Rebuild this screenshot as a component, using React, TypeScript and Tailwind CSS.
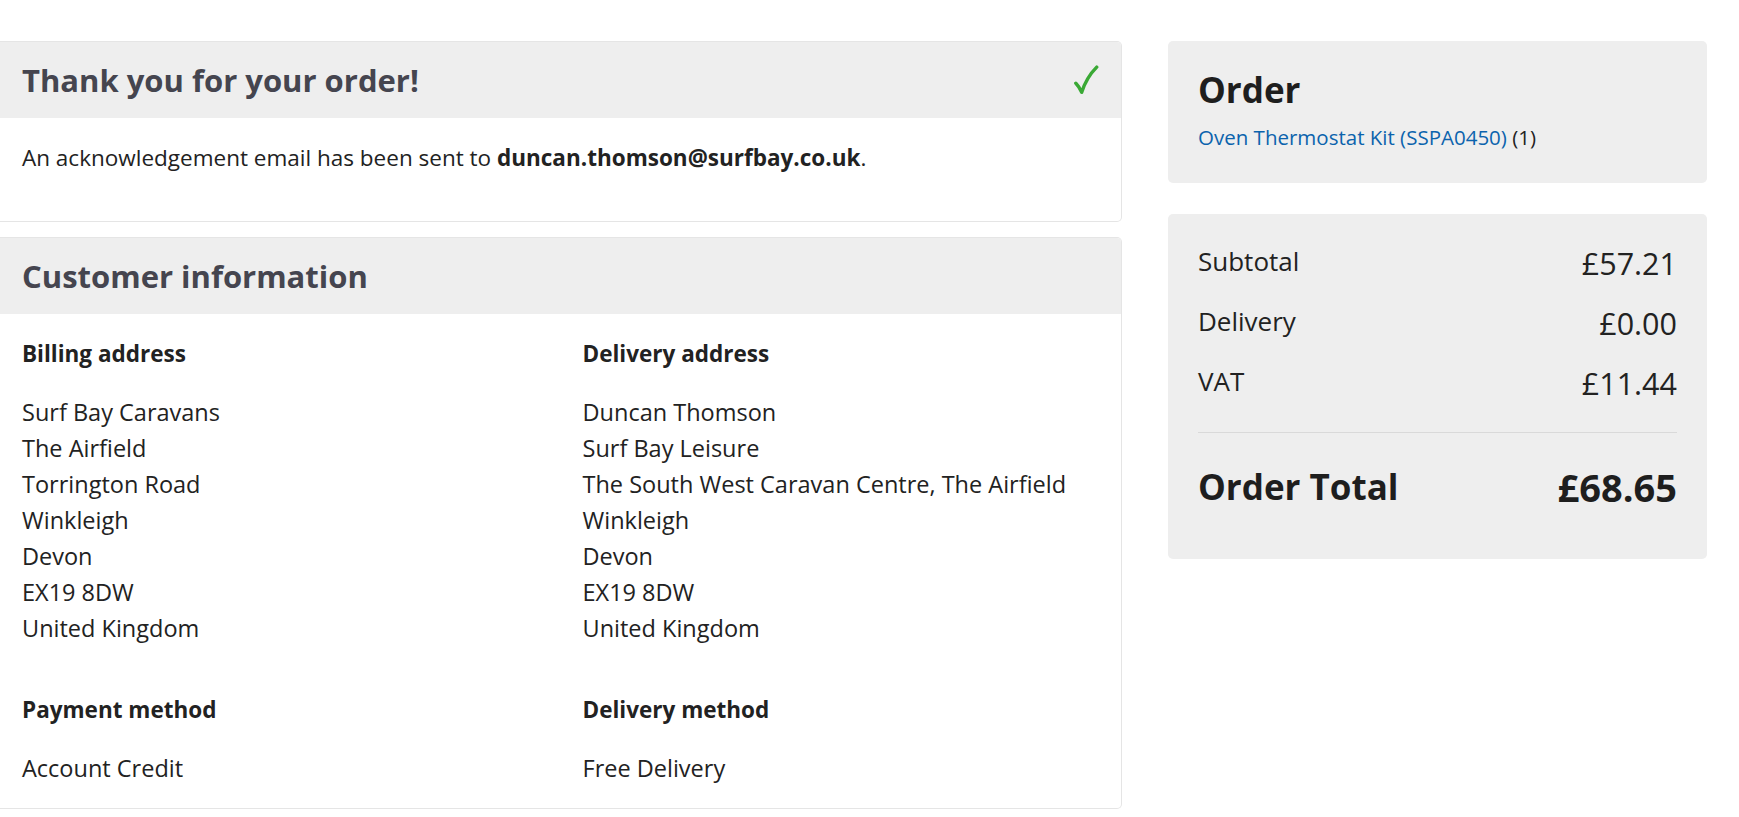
import React from "react";

const billing = [
  "Surf Bay Caravans",
  "The Airfield",
  "Torrington Road",
  "Winkleigh",
  "Devon",
  "EX19 8DW",
  "United Kingdom",
];

const delivery = [
  "Duncan Thomson",
  "Surf Bay Leisure",
  "The South West Caravan Centre, The Airfield",
  "Winkleigh",
  "Devon",
  "EX19 8DW",
  "United Kingdom",
];

const totals = [
  { label: "Subtotal", value: "£57.21" },
  { label: "Delivery", value: "£0.00" },
  { label: "VAT", value: "£11.44" },
];

function CardHeader({ title, check }: { title: string; check?: boolean }) {
  return (
    <div className="flex h-[76px] items-center justify-between bg-[#eeeeee] pl-[22px] pr-[22px]">
      <h2 className="text-[31px] font-bold leading-none text-[#45454f]">{title}</h2>
      {check && (
        <svg viewBox="0 0 24 28" className="h-[30px] w-[26px]" fill="none">
          <path
            d="M2.5 17 C5 19.5 6.5 22 8 25.5 C11 16 15.5 8.5 22 2"
            stroke="#3aa935"
            strokeWidth="3.2"
            strokeLinecap="round"
            strokeLinejoin="round"
          />
        </svg>
      )}
    </div>
  );
}

function AddressBlock({ title, lines }: { title: string; lines: string[] }) {
  return (
    <div>
      <h3 className="text-[22.5px] font-bold leading-[36px] text-[#222222]">{title}</h3>
      <div className="mt-[22px] text-[23.5px] leading-[36px] text-[#222222]">
        {lines.map((l) => (
          <div key={l}>{l}</div>
        ))}
      </div>
    </div>
  );
}

export default function App() {
  return (
    <div
      className="flex min-h-screen gap-[46px] bg-white pr-[32px] pt-[41px]"
      style={{ fontFamily: "'Open Sans', 'Noto Sans', sans-serif" }}
    >
      <div className="flex w-[1122px] shrink-0 flex-col gap-[15px]">
        <section className="overflow-hidden rounded-r-[5px] border border-l-0 border-[#e5e5e5]">
          <CardHeader title="Thank you for your order!" check />
          <div className="h-[103px] px-[22px] pt-[22px] text-[22.5px] leading-[36px] text-[#222222]">
            An acknowledgement email has been sent to{" "}
            <span className="font-bold">duncan.thomson@surfbay.co.uk</span>.
          </div>
        </section>

        <section className="overflow-hidden rounded-r-[5px] border border-l-0 border-[#e5e5e5]">
          <CardHeader title="Customer information" />
          <div className="grid grid-cols-2 gap-x-[44px] px-[22px] pb-[22px] pt-[22px]">
            <AddressBlock title="Billing address" lines={billing} />
            <AddressBlock title="Delivery address" lines={delivery} />
            <div className="mt-[46px]">
              <AddressBlock title="Payment method" lines={["Account Credit"]} />
            </div>
            <div className="mt-[46px]">
              <AddressBlock title="Delivery method" lines={["Free Delivery"]} />
            </div>
          </div>
        </section>
      </div>

      <div className="flex w-[539px] shrink-0 flex-col gap-[31px]">
        <section className="h-[142px] rounded-[5px] bg-[#eeeeee] px-[30px] pt-[28px]">
          <h2 className="text-[35px] font-bold leading-[42px] text-[#1e1e1e]">Order</h2>
          <p className="mt-[13px] text-[20.5px] leading-[26px] text-[#222222]">
            <a href="#" className="text-[#0b63ad]">
              Oven Thermostat Kit (SSPA0450)
            </a>{" "}
            (1)
          </p>
        </section>

        <section className="h-[345px] rounded-[5px] bg-[#eeeeee] px-[30px] pt-[30px]">
          <div className="flex flex-col gap-[22px]">
            {totals.map((t) => (
              <div key={t.label} className="flex items-center justify-between text-[#222222]">
                <span className="-mt-[4px] text-[26px] leading-[38px]">{t.label}</span>
                <span className="text-[30.5px] leading-[38px]">{t.value}</span>
              </div>
            ))}
          </div>
          <div className="mt-[30px] border-t border-[#d9d9d9]" />
          <div className="mt-[30px] flex items-center justify-between text-[#1e1e1e]">
            <span className="text-[35px] font-bold leading-[48px]">Order Total</span>
            <span className="text-[38px] font-bold leading-[48px]">£68.65</span>
          </div>
        </section>
      </div>
    </div>
  );
}
